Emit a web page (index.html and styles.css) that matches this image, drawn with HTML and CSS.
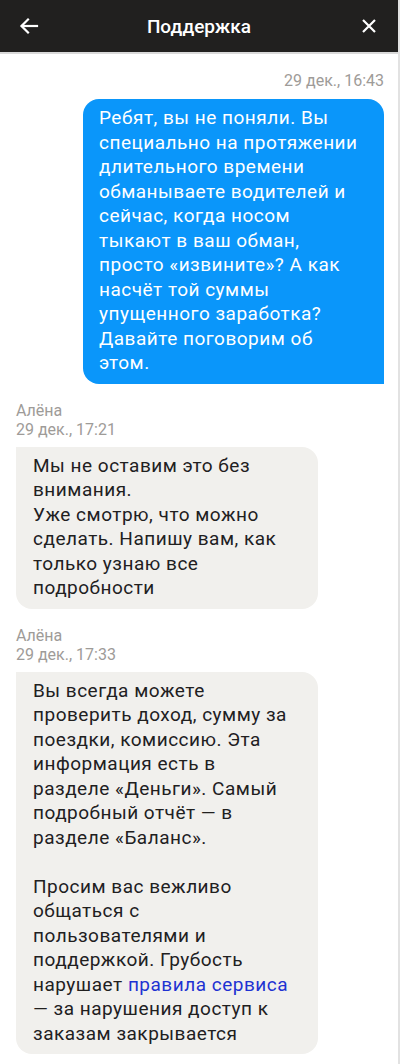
FILE: index.html
```html
<!DOCTYPE html>
<html lang="ru">
<head>
    <meta charset="UTF-8">
    <meta name="viewport" content="width=device-width, initial-scale=1.0">
    <title>Поддержка</title>
    <link rel="stylesheet" href="styles.css">
</head>
<body>
    <div class="screen">
        <header class="topbar">
            <button class="icon-btn" aria-label="Назад">
                <svg width="20" height="20" viewBox="0 0 20 20" fill="none" stroke="#fff" stroke-width="2.2" stroke-linecap="square">
                    <path d="M18 10H3"/>
                    <path d="M9 3.5L2.5 10L9 16.5"/>
                </svg>
            </button>
            <h1>Поддержка</h1>
            <button class="icon-btn" aria-label="Закрыть">
                <svg width="18" height="18" viewBox="0 0 18 18" fill="none" stroke="#fff" stroke-width="2.2">
                    <path d="M3 3L15 15M15 3L3 15"/>
                </svg>
            </button>
        </header>

        <main class="chat">
            <!-- outgoing -->
            <div class="msg out">
                <div class="meta">29 дек., 16:43</div>
                <div class="bubble">Ребят, вы не поняли. Вы<br>специально на протяжении<br>длительного времени<br>обманываете водителей и<br>сейчас, когда носом<br>тыкают в ваш обман,<br>просто «извините»? А как<br>насчёт той суммы<br>упущенного заработка?<br>Давайте поговорим об<br>этом.</div>
            </div>

            <!-- incoming -->
            <div class="msg in">
                <div class="meta">Алёна<br>29 дек., 17:21</div>
                <div class="bubble">Мы не оставим это без<br>внимания.<br>Уже смотрю, что можно<br>сделать. Напишу вам, как<br>только узнаю все<br>подробности</div>
            </div>

            <div class="msg in">
                <div class="meta">Алёна<br>29 дек., 17:33</div>
                <div class="bubble">Вы всегда можете<br>проверить доход, сумму за<br>поездки, комиссию. Эта<br>информация есть в<br>разделе «Деньги». Самый<br>подробный отчёт — в<br>разделе «Баланс».<br><br>Просим вас вежливо<br>общаться с<br>пользователями и<br>поддержкой. Грубость<br>нарушает <a href="#">правила сервиса</a><br>— за нарушения доступ к<br>заказам закрывается</div>
            </div>
        </main>
    </div>
</body>
</html>
```

FILE: styles.css
```css
body {
    margin: 0;
    padding: 0;
    background: #fff;
    font-family: Roboto, "Noto Sans", sans-serif;
    color: #21201f;
}
.screen {
    width: 400px;
    min-height: 1064px;
    border-right: 2px solid #e2e2e2;
    box-sizing: border-box;
}
.topbar {
    height: 52px;
    background-color: #21201f;
    border-bottom: 2px solid #d9d9d9;
    display: flex;
    align-items: center;
    justify-content: space-between;
    padding: 0 10px 0 10px;
}
.topbar h1 {
    margin: 0;
    color: #fff;
    font-size: 19px;
    font-weight: 500;
}
.icon-btn {
    width: 38px;
    height: 38px;
    background: none;
    border: none;
    padding: 0;
    display: flex;
    align-items: center;
    justify-content: center;
}
.chat {
    padding: 17px 14px 0 16px;
    display: flex;
    flex-direction: column;
    gap: 17px;
}
.msg {
    display: flex;
    flex-direction: column;
}
.meta {
    font-size: 16px;
    line-height: 19px;
    color: #9e9b98;
    margin-bottom: 8px;
}
.bubble {
    font-size: 19px;
    line-height: 24.5px;
    letter-spacing: 0.5px;
    border-radius: 16px;
    white-space: nowrap;
}
.msg.out {
    align-items: flex-end;
}
.msg.out .meta {
    margin-bottom: 9px;
}
.msg.out .bubble {
    width: 301px;
    box-sizing: border-box;
    padding: 7px 8px 8px 16px;
    background-color: #0a96fa;
    color: #fff;
    border-bottom-right-radius: 0;
}
.msg.in .bubble {
    width: 302px;
    box-sizing: border-box;
    padding: 7px 8px 8px 17px;
    background-color: #f1f0ed;
    border-top-left-radius: 0;
}
.bubble a {
    color: #1e32d2;
    text-decoration: none;
}
```
